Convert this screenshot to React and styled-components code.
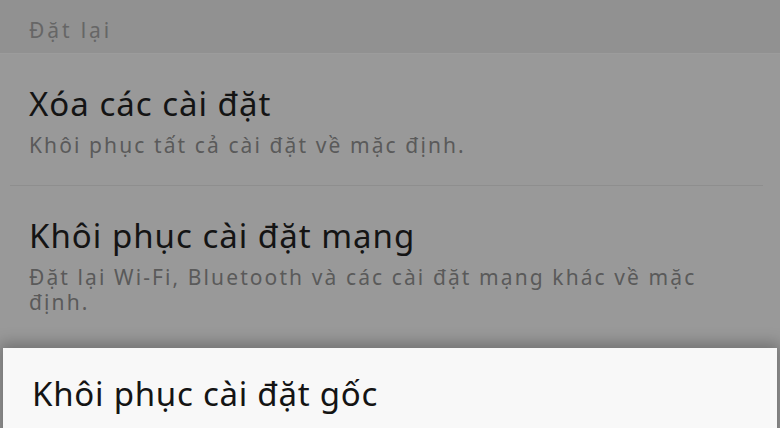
import React from "react";
import styled, { createGlobalStyle } from "styled-components";

const Global = createGlobalStyle`
  html, body { margin: 0; padding: 0; background: #999999; }
  body { font-family: "Noto Sans", Roboto, "Liberation Sans", sans-serif; }
`;

const Screen = styled.div`
  width: 780px;
  height: 428px;
  overflow: hidden;
  background: #999999;
  display: flex;
  flex-direction: column;
`;

const SectionHeader = styled.div`
  height: 54px;
  flex: none;
  box-sizing: border-box;
  padding: 18px 0 0 29px;
  background: #919191;
  border-bottom: 1px solid #9c9c9c;
  color: #666666;
  font-size: 21px;
  line-height: 25px;
  letter-spacing: 2.9px;
`;

const Item = styled.div`
  flex: none;
  position: relative;
  box-sizing: border-box;
  padding: ${(p) => (p.$active ? "26px 60px 29px 29px" : "30px 60px 28px 29px")};
  background: ${(p) => (p.$active ? "#f8f8f8" : "transparent")};
  margin: ${(p) => (p.$active ? "5px 3px 0" : "0")};
  box-shadow: ${(p) => (p.$active ? "0 -2px 14px 3px rgba(0,0,0,0.26)" : "none")};
  &::after {
    content: "";
    display: ${(p) => (p.$divider ? "block" : "none")};
    position: absolute;
    left: 10px;
    right: 17px;
    bottom: 0;
    height: 1px;
    background: #8e8e8e;
  }
`;

const Title = styled.div`
  font-size: 33px;
  line-height: 40px;
  color: #141414;
  letter-spacing: ${(p) => (p.$active ? "0.75px" : "1px")};
`;

const Subtitle = styled.div`
  margin-top: ${(p) => (p.$active ? "13px" : "9px")};
  font-size: 21px;
  line-height: 25px;
  letter-spacing: 2.1px;
  color: ${(p) => (p.$active ? "#666666" : "#5a5a5a")};
`;

const items = [
  {
    title: "Xóa các cài đặt",
    sub: "Khôi phục tất cả cài đặt về mặc định.",
    divider: true,
  },
  {
    title: "Khôi phục cài đặt mạng",
    sub: "Đặt lại Wi-Fi, Bluetooth và các cài đặt mạng khác về mặc định.",
    divider: false,
  },
  {
    title: "Khôi phục cài đặt gốc",
    sub: "Khôi phục điện thoại về cài đặt gốc và xóa tất cả dữ liệu của bạn.",
    active: true,
  },
];

export default function App() {
  return (
    <>
      <Global />
      <Screen>
        <SectionHeader>Đặt lại</SectionHeader>
        {items.map((it) => (
          <Item key={it.title} $divider={it.divider} $active={it.active}>
            <Title $active={it.active}>{it.title}</Title>
            <Subtitle $active={it.active}>{it.sub}</Subtitle>
          </Item>
        ))}
      </Screen>
    </>
  );
}
